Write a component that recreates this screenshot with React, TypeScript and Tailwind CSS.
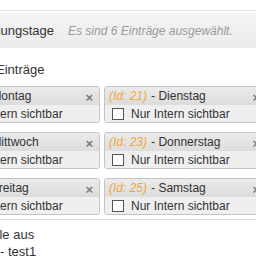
const days = [
  { id: 20, name: 'Montag' },
  { id: 21, name: 'Dienstag' },
  { id: 22, name: 'Mittwoch' },
  { id: 23, name: 'Donnerstag' },
  { id: 24, name: 'Freitag' },
  { id: 25, name: 'Samstag' },
];

const DayBox = ({ id, name }: { id: number; name: string }) => (
  <div className="w-[163px] border border-[#c4c4c4] rounded-[3px] overflow-hidden">
    <div className="relative h-[18px] flex items-center pl-[4px] text-[12px] bg-gradient-to-b from-[#ebebeb] to-[#dcdcdc] whitespace-nowrap">
      <span className="italic text-[#f0a73e]">(Id: {id})</span>
      <span className="ml-[4px]">- {name}</span>
      <span className="absolute right-[6px] top-[1px] text-[13px] font-bold text-[#7a7a7a]">×</span>
    </div>
    <div className="h-[17px] flex items-center pl-[7px] gap-[7px] bg-[#efefef] text-[12px] whitespace-nowrap">
      <span className="w-[12px] h-[12px] border border-[#555] bg-white shrink-0"></span>
      <span>Nur Intern sichtbar</span>
    </div>
  </div>
);

export default function App() {
  return (
    <div className="w-[256px] h-[256px] overflow-hidden bg-white text-[#333] font-['Liberation_Sans',Arial,sans-serif]">
      <div className="pt-[10px]">
        <div className="border-t border-[#e2e2e2] pt-[2px]">
          <div className="h-[35px] flex items-center whitespace-nowrap bg-gradient-to-b from-[#f4f4f4] to-[#ececec]">
            <span className="-ml-[32px] text-[13px]">Schulungstage</span>
            <span className="ml-[14px] italic text-[12px] text-[#9a9a9a]">Es sind 6 Einträge ausgewählt.</span>
          </div>
        </div>
      </div>

      <div className="mt-[14px] h-[15px] leading-[15px] text-[13px] -ml-[4px] whitespace-nowrap">Einträge</div>

      <div className="mt-[9px] -ml-[63px] w-[400px] flex flex-wrap gap-x-[4px] gap-y-[9px]">
        {days.map((d) => (
          <DayBox key={d.id} id={d.id} name={d.name} />
        ))}
      </div>

      <div className="mt-[4px] border-t border-[#dddddd] pt-[6px] text-[13px] leading-[17px] whitespace-nowrap">
        <div className="-ml-[54px]">Bitte wähle aus</div>
        <div>- test1</div>
      </div>
    </div>
  );
}
